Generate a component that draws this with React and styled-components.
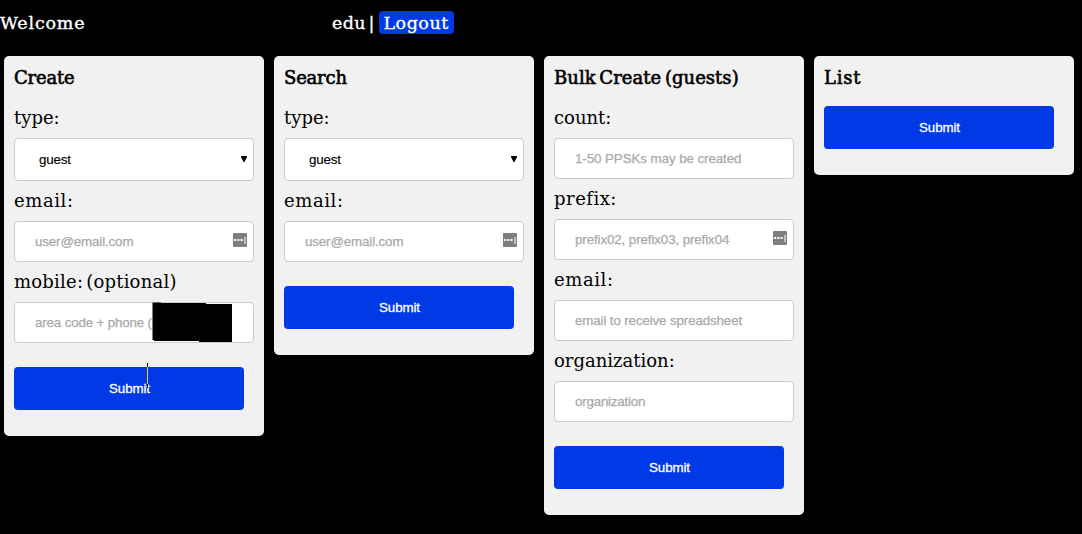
import React from 'react';
import styled, { createGlobalStyle } from 'styled-components';

const GlobalStyle = createGlobalStyle`
  * { box-sizing: border-box; }
  body {
    margin: 0;
    background: #000;
    font-family: "DejaVu Serif", "Liberation Serif", serif;
    font-size: 18px;
  }
`;

const Page = styled.div`
  min-height: 534px;
  overflow: hidden;
`;

const Header = styled.header`
  display: flex;
  align-items: center;
  height: 45px;
  margin-bottom: 11px;
  color: #fff;
  font-size: 17.5px;
  line-height: 24px;
  -webkit-text-stroke: 0.35px currentColor;
`;

const Welcome = styled.span`
  width: 332px;
  letter-spacing: 0.8px;
`;

const Account = styled.div`
  display: flex;
  align-items: center;
  white-space: pre;
`;

const UserName = styled.span`
  width: 47px;
  letter-spacing: 0.4px;
  word-spacing: -3.5px;
`;

const LogoutLink = styled.a`
  height: 23px;
  width: 75px;
  padding-left: 4.5px;
  border-radius: 4px;
  background: #0039e6;
  color: #fff;
  letter-spacing: 0.5px;
`;

const Cards = styled.main`
  display: flex;
  align-items: flex-start;
  gap: 10px;
  padding-left: 4px;
`;

const Card = styled.section`
  flex: 0 0 260px;
  padding: 0 10px 26px;
  border-radius: 5px;
  background: #f1f1f1;
  color: #000;
`;

const Title = styled.h2`
  margin: 0;
  height: 50px;
  padding-top: 10px;
  font-size: 18px;
  font-weight: 400;
  line-height: 24px;
  white-space: nowrap;
  letter-spacing: ${(p) => p.$track || 0}px;
  word-spacing: -2px;
  -webkit-text-stroke: 0.6px currentColor;
`;

const Label = styled.label`
  display: block;
  height: 32px;
  line-height: 24px;
  white-space: nowrap;
  letter-spacing: ${(p) => p.$track || 0}px;
  word-spacing: -3px;
`;

const Control = styled.div`
  position: relative;
  display: flex;
  align-items: center;
  justify-content: space-between;
  height: ${(p) => (p.$select ? 43 : 41)}px;
  margin-bottom: 8px;
  padding: ${(p) => (p.$select ? '0 6px 0 24px' : '0 6px 0 20px')};
  border: 1px solid #ccc;
  border-radius: 4px;
  background: #fff;
  color: #000;
  font: 13.333px "Liberation Sans", Arial, sans-serif;
`;

const Value = styled.span`
  letter-spacing: -0.15px;
  -webkit-text-stroke: 0.15px currentColor;
`;

const TextInput = styled.input`
  flex: 1;
  min-width: 0;
  height: 37px;
  padding: 0 0 1px;
  border: 0;
  outline: 0;
  background: transparent;
  font: inherit;
  letter-spacing: ${(p) => p.$track || 0}px;
  &::placeholder {
    color: #a9a9a9;
    opacity: 1;
    -webkit-text-stroke: 0.25px #a9a9a9;
  }
`;

const Submit = styled.button`
  position: relative;
  display: block;
  width: 230px;
  height: 43px;
  margin: 0;
  padding: 0 0 0 1px;
  border: 0;
  border-radius: 4px;
  background: #0039e6;
  color: #fff;
  font: 13.333px "Liberation Sans", Arial, sans-serif;
  letter-spacing: -0.1px;
  -webkit-text-stroke: 0.3px currentColor;
`;

const Form = styled.form`
  & > ${Submit} { margin-top: ${(p) => (p.$flush ? 0 : 24)}px; }
  & > ${Control}:nth-last-child(2) { margin-bottom: 0; }
`;

const Redaction = styled.svg`
  position: absolute;
  left: 137px;
  top: -1px;
`;

const Caret = styled.svg`
  position: absolute;
  left: 133px;
  top: -4px;
`;

const KeySvg = styled.svg`
  margin-top: -3px;
`;

const ArrowSvg = styled.svg`
  margin-top: -2px;
`;

const KeyIcon = () => (
  <KeySvg width="14" height="14" viewBox="0 0 14 14">
    <rect width="14" height="14" rx="1" fill="#7f7f7f" />
    <path d="M1.2 6h2v2h-2zM4.4 6h2v2h-2zM7.6 6h2v2h-2zM11.5 4h1v7h-1z" fill="#fff" />
  </KeySvg>
);

const Arrow = () => (
  <ArrowSvg width="6" height="6" viewBox="0 0 6 6">
    <path d="M0 0H6V1L3.5 6H2.5L0 1z" fill="#000" />
  </ArrowSvg>
);

const Field = ({ label, placeholder, track, labelTrack, icon, children }) => (
  <>
    <Label $track={labelTrack}>{label}</Label>
    <Control>
      <TextInput placeholder={placeholder} $track={track} />
      {icon && <KeyIcon />}
      {children}
    </Control>
  </>
);

const TypeField = () => (
  <>
    <Label>type:</Label>
    <Control $select>
      <Value>guest</Value>
      <Arrow />
    </Control>
  </>
);

export default function App() {
  return (
    <Page>
      <GlobalStyle />
      <Header>
        <Welcome>Welcome</Welcome>
        <Account>
          <UserName>edu |</UserName>
          <LogoutLink>Logout</LogoutLink>
        </Account>
      </Header>
      <Cards>
        <Card>
          <Title $track={-0.2}>Create</Title>
          <Form>
            <TypeField />
            <Field label="email:" labelTrack={0.6} placeholder="user@email.com" track={-0.13} icon />
            <Field label="mobile: (optional)" labelTrack={0.22} placeholder="area code + phone (" track={-0.15}>
              <Redaction width="81" height="41" viewBox="0 0 81 41">
                <path d="M0.5 0.5H9V1H54V2H80V40H47V39H2V38H0.5z" fill="#000" />
              </Redaction>
            </Field>
            <Submit type="button">
              Submit
              <Caret width="2" height="26" viewBox="0 0 2 26">
                <path d="M0 0h1v4H0zM0 21h1v4H0z" fill="#000" />
                <path d="M0 4h1v17H0z" fill="#ffc619" />
              </Caret>
            </Submit>
          </Form>
        </Card>
        <Card>
          <Title $track={-0.2}>Search</Title>
          <Form>
            <TypeField />
            <Field label="email:" labelTrack={0.6} placeholder="user@email.com" track={-0.13} icon />
            <Submit type="button">Submit</Submit>
          </Form>
        </Card>
        <Card>
          <Title $track={0.03}>Bulk Create (guests)</Title>
          <Form>
            <Field label="count:" placeholder="1-50 PPSKs may be created" track={-0.07} />
            <Field label="prefix:" labelTrack={0.5} placeholder="prefix02, prefix03, prefix04" track={-0.1} icon />
            <Field label="email:" labelTrack={0.6} placeholder="email to receive spreadsheet" track={-0.12} />
            <Field label="organization:" placeholder="organization" track={-0.2} />
            <Submit type="button">Submit</Submit>
          </Form>
        </Card>
        <Card>
          <Title $track={0.8}>List</Title>
          <Form $flush>
            <Submit type="button">Submit</Submit>
          </Form>
        </Card>
      </Cards>
    </Page>
  );
}
